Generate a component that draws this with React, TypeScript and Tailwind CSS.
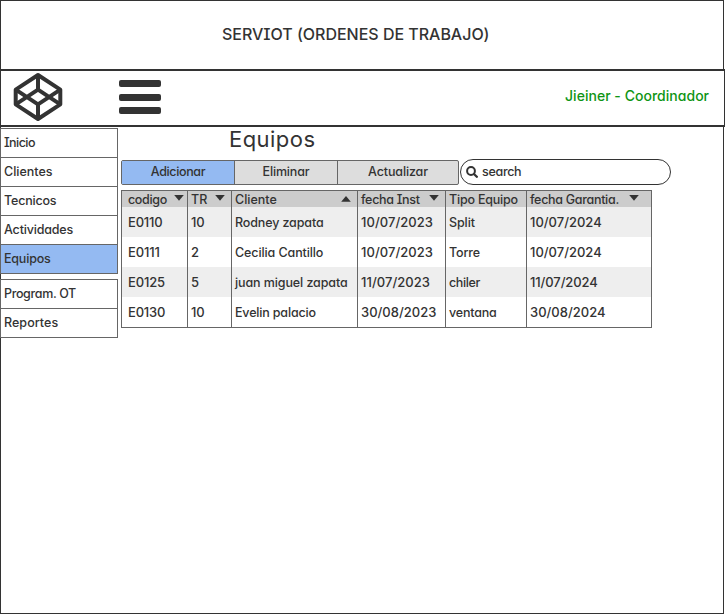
const label = "block w-max whitespace-nowrap";

const menu = [
  { text: "Inicio", tracking: "tracking-[-0.55px]" },
  { text: "Clientes", tracking: "tracking-[0px]" },
  { text: "Tecnicos", tracking: "tracking-[-0.2px]" },
  { text: "Actividades", tracking: "tracking-[-0.17px]" },
  { text: "Equipos", tracking: "tracking-[-0.2px]", active: true },
];

const menuBottom = [
  { text: "Program. OT", tracking: "tracking-[-0.35px]" },
  { text: "Reportes", tracking: "tracking-[0.05px]" },
];

type Cell = [string, string];

const columns: { title: Cell; sort?: "up" | "down"; width: string; pad: string; arrow: string; cells: Cell[] }[] = [
  {
    title: ["codigo", "tracking-[-0.35px]"], sort: "down", width: "w-[66px]", pad: "pl-1.5", arrow: "right-[3px] top-1",
    cells: [["E0110", "text-[13px] tracking-[-0.2px]"], ["E0111", "text-[13px] tracking-[-0.1px]"], ["E0125", "text-[13px] tracking-[-0.15px]"], ["E0130", "text-[13px] tracking-[-0.2px]"]],
  },
  {
    title: ["TR", "tracking-[0px]"], sort: "down", width: "w-[44px]", pad: "pl-[3px]", arrow: "right-[6px] top-1",
    cells: [["10", "text-[13px] tracking-[-0.1px]"], ["2", "text-[13px]"], ["5", "text-[13px]"], ["10", "text-[13px] tracking-[-0.1px]"]],
  },
  {
    title: ["Cliente", "tracking-[0px]"], sort: "up", width: "w-[126px]", pad: "pl-[3px]", arrow: "right-[6px] top-[5px]",
    cells: [["Rodney zapata", "tracking-[-0.13px]"], ["Cecilia Cantillo", "tracking-[-0.1px]"], ["juan miguel zapata", "tracking-[-0.1px]"], ["Evelin palacio", "tracking-[-0.17px]"]],
  },
  {
    title: ["fecha Inst", "tracking-[-0.3px]"], sort: "down", width: "w-[88px]", pad: "pl-[3px]", arrow: "right-[6px] top-1",
    cells: [["10/07/2023", "text-[13px] tracking-[0.05px]"], ["10/07/2023", "text-[13px] tracking-[0.05px]"], ["11/07/2023", "text-[13px] tracking-[0.05px]"], ["30/08/2023", "text-[13px]"]],
  },
  {
    title: ["Tipo Equipo", "tracking-[-0.2px]"], width: "w-[81px]", pad: "pl-[3px]", arrow: "",
    cells: [["Split", "tracking-[-0.1px]"], ["Torre", "tracking-[-0.15px]"], ["chiler", "tracking-[-0.4px]"], ["ventana", "tracking-[-0.2px]"]],
  },
  {
    title: ["fecha Garantia.", "tracking-[-0.3px]"], sort: "down", width: "w-[125px]", pad: "pl-[3px]", arrow: "right-[12px] top-1",
    cells: [["10/07/2024", "text-[13px]"], ["10/07/2024", "text-[13px]"], ["11/07/2024", "text-[13px] tracking-[-0.1px]"], ["30/08/2024", "text-[13px]"]],
  },
];

function MenuRow({ item }: { item: { text: string; tracking: string; active?: boolean } }) {
  return (
    <li className={`h-[29px] border-b border-[#666] pl-[3px] leading-[27px] ${item.active ? "bg-[#94baf2]" : "bg-white"}`}>
      <span className={`${label} ${item.tracking}`}>{item.text}</span>
    </li>
  );
}

function Logo() {
  return (
    <svg className="ml-[13px] mt-px h-[50px] w-[50px]" viewBox="13 72 50 50" fill="none" stroke="#333" strokeWidth="4" strokeLinejoin="round">
      <path d="M38 75 60.3 89.7V104.3L38 119 15.7 104.3V89.7Z" />
      <path d="M38 75V89.7L60.3 104.3M38 89.7 15.7 104.3M38 119V104.3L60.3 89.7M38 104.3 15.7 89.7" />
    </svg>
  );
}

export default function App() {
  return (
    <div className="h-[614px] w-[725px] bg-white font-['Inter','Liberation_Sans',sans-serif] text-[12.5px] font-medium text-[#333] [font-feature-settings:'cv11','cv08']">
      <div className="flex h-[614px] w-[724px] flex-col border border-[#333]">
        <header className="h-[68px] shrink-0 pl-[221px] pt-[21px] text-[16px] leading-6">
          <span className={`${label} tracking-[-0.02px]`}>SERVIOT (ORDENES DE TRABAJO)</span>
        </header>
        <nav className="-ml-px flex h-[58px] w-[725px] shrink-0 border-y-2 border-l border-r border-[#333] bg-white">
          <div className="-ml-px"><Logo /></div>
          <div className="ml-[56px] mt-[9px] flex h-[34px] w-[42px] flex-col justify-between">
            <i className="h-[7px] rounded-[2px] bg-[#333]" />
            <i className="h-[7px] rounded-[2px] bg-[#333]" />
            <i className="h-[7px] rounded-[2px] bg-[#333]" />
          </div>
          <div className="ml-[404px] mt-[13px] text-[14px] leading-6 text-[#0f9515]">
            <span className={`${label} tracking-[0.03px]`}>Jieiner - Coordinador</span>
          </div>
        </nav>
        <div className="-ml-px flex pt-px">
          <aside className="w-[118px] shrink-0">
            <ul className="border-x border-t border-[#666]">
              {menu.map((m) => <MenuRow key={m.text} item={m} />)}
            </ul>
            <ul className="mt-[5px] border-x border-t border-[#666]">
              {menuBottom.map((m) => <MenuRow key={m.text} item={m} />)}
            </ul>
          </aside>
          <main className="ml-[3px]">
            <h1 className="h-8 pl-[108px] text-[22px] font-normal leading-[23px]">
              <span className={`${label} tracking-[0.45px]`}>Equipos</span>
            </h1>
            <div className="flex">
              <div className="flex h-[25px] w-[338px] rounded-[2px] border border-[#666] bg-[#ddd] leading-[22px]">
                <button className="flex w-[112px] justify-center bg-[#94baf2]"><span className={`${label} tracking-[-0.35px]`}>Adicionar</span></button>
                <button className="flex w-[103px] justify-center border-l border-[#666]"><span className={`${label} tracking-[-0.15px]`}>Eliminar</span></button>
                <button className="flex flex-1 justify-center border-l border-[#666]"><span className={`${label} tracking-[-0.13px]`}>Actualizar</span></button>
              </div>
              <div className="-mt-px ml-px flex h-[26px] w-[211px] items-center rounded-full border border-[#333] pl-[5px]">
                <svg className="h-3 w-3" viewBox="0 0 12 12" fill="none" stroke="#333" strokeWidth="2" strokeLinecap="round">
                  <circle cx="5" cy="5" r="3.9" />
                  <path d="m8.2 8.2 2.6 2.6" strokeWidth="2.3" />
                </svg>
                <span className={`${label} ml-1 tracking-[-0.3px]`}>search</span>
              </div>
            </div>
            <div className="mt-[5px] flex h-[138px] w-[531px] border border-l-0 border-[#666]">
              {columns.map((c, i) => (
                <div key={i} className={`relative border-l border-[#666] ${c.width}`}>
                  <div className={`h-4 bg-[#ccc] leading-[18px] ${c.pad}`}>
                    <span className={`${label} ${c.title[1]}`}>{c.title[0]}</span>
                  </div>
                  {c.sort && (
                    <svg className={`absolute h-[6px] w-[10px] ${c.arrow}`} viewBox="0 0 10 6" fill="#333">
                      <path d={c.sort === "down" ? "M.2 0h9.6L5 5.7Z" : "M.2 5.7h9.6L5 0Z"} />
                    </svg>
                  )}
                  {c.cells.map(([text, tracking], r) => (
                    <div key={r} className={`h-[30px] leading-[31px] ${c.pad} ${r % 2 ? "bg-white" : "bg-[#eee]"}`}>
                      <span className={`${label} ${tracking}`}>{text}</span>
                    </div>
                  ))}
                </div>
              ))}
            </div>
          </main>
        </div>
      </div>
    </div>
  );
}
